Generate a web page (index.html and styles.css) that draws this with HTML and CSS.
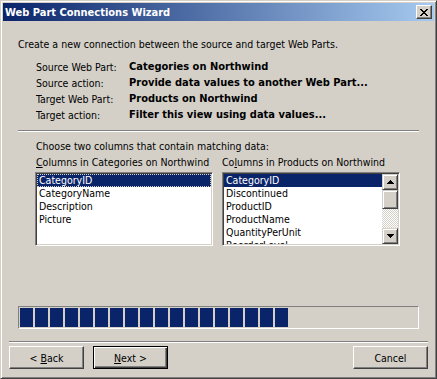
FILE: index.html
```html
<!DOCTYPE html>
<html lang="en">
<head>
    <meta charset="UTF-8">
    <meta name="viewport" content="width=device-width, initial-scale=1.0">
    <title>Web Part Connections Wizard</title>
    <link rel="stylesheet" href="styles.css">
</head>
<body>

    <div class="window">
        <!-- Title Bar -->
        <div class="titlebar">
            <span class="title">Web Part Connections Wizard</span>
            <button class="close-btn" title="Close">
                <svg width="8" height="7" viewBox="0 0 8 7"><path d="M0 0h2v1h-2zM6 0h2v1h-2zM1 1h2v1h-2zM5 1h2v1h-2zM2 2h4v1h-4zM3 3h2v1h-2zM2 4h4v1h-4zM1 5h2v1h-2zM5 5h2v1h-2zM0 6h2v1h-2zM6 6h2v1h-2z"/></svg>
            </button>
        </div>

        <!-- Wizard Page -->
        <div class="content">
            <p class="intro">Create a new connection between the source and target Web Parts.</p>

            <dl class="summary">
                <dt>Source Web Part:</dt>
                <dd>Categories on Northwind</dd>
                <dt>Source action:</dt>
                <dd>Provide data values to another Web Part...</dd>
                <dt>Target Web Part:</dt>
                <dd>Products on Northwind</dd>
                <dt>Target action:</dt>
                <dd>Filter this view using data values...</dd>
            </dl>

            <div class="etched"></div>

            <p class="choose">Choose two columns that contain matching data:</p>

            <div class="lists">
                <div class="list-group">
                    <label><u>C</u>olumns in Categories on Northwind</label>
                    <div class="listbox">
                        <ul class="items">
                            <li class="selected focused">CategoryID</li>
                            <li>CategoryName</li>
                            <li>Description</li>
                            <li>Picture</li>
                        </ul>
                    </div>
                </div>
                <div class="list-group">
                    <label>Co<u>l</u>umns in Products on Northwind</label>
                    <div class="listbox">
                        <ul class="items">
                            <li class="selected">CategoryID</li>
                            <li>Discontinued</li>
                            <li>ProductID</li>
                            <li>ProductName</li>
                            <li>QuantityPerUnit</li>
                            <li>ReorderLevel</li>
                        </ul>
                        <div class="scrollbar">
                            <div class="scroll-btn">
                                <svg width="7" height="4" viewBox="0 0 7 4"><path d="M3 0h1v1h1v1h1v1h1v1h-7v-1h1v-1h1v-1h1z"/></svg>
                            </div>
                            <div class="scroll-btn thumb"></div>
                            <div class="track"></div>
                            <div class="scroll-btn">
                                <svg width="7" height="4" viewBox="0 0 7 4"><path d="M0 0h7v1h-1v1h-1v1h-1v1h-1v-1h-1v-1h-1v-1h-1z"/></svg>
                            </div>
                        </div>
                    </div>
                </div>
            </div>

            <div class="progress">
                <span class="block"></span><span class="block"></span><span class="block"></span>
                <span class="block"></span><span class="block"></span><span class="block"></span>
                <span class="block"></span><span class="block"></span><span class="block"></span>
                <span class="block"></span><span class="block"></span><span class="block"></span>
                <span class="block"></span><span class="block"></span><span class="block"></span>
                <span class="block"></span><span class="block"></span><span class="block"></span>
            </div>
        </div>

        <div class="etched footer-line"></div>

        <!-- Buttons -->
        <div class="buttons">
            <button class="btn">&lt; <u>B</u>ack</button>
            <button class="btn default"><u>N</u>ext &gt;</button>
            <button class="btn cancel">Cancel</button>
        </div>
    </div>

</body>
</html>
```

FILE: styles.css
```css
* {
    box-sizing: border-box;
    margin: 0;
    padding: 0;
}
body {
    font-family: Tahoma, "DejaVu Sans Condensed", "Liberation Sans", sans-serif;
    font-size: 10.5px;
    background-color: #d4d0c8;
    color: #000;
}
.window {
    width: 437px;
    height: 379px;
    padding: 2px;
    background-color: #d4d0c8;
    border: 1px solid;
    border-color: #d4d0c8 #404040 #404040 #d4d0c8;
    box-shadow: inset 1px 1px #fff, inset -1px -1px #808080;
}
.titlebar {
    height: 18px;
    display: flex;
    align-items: center;
    justify-content: space-between;
    padding: 0 2px;
    background: linear-gradient(to right, #0a246a, #a6caf0);
    color: #fff;
    font-size: 11px;
    font-weight: bold;
}
.close-btn {
    width: 16px;
    height: 14px;
    display: flex;
    align-items: center;
    justify-content: center;
    background-color: #d4d0c8;
    border: 1px solid;
    border-color: #fff #404040 #404040 #fff;
    box-shadow: inset -1px -1px #808080;
}
.content {
    padding: 17px 15px 0;
}
.intro {
    line-height: 13px;
    margin-bottom: 8px;
}
.summary {
    display: grid;
    grid-template-columns: 93px auto;
    margin-left: 18px;
    line-height: 16px;
}
.summary dd {
    font-size: 11px;
    font-weight: bold;
}
.etched {
    height: 2px;
    margin-top: 7px;
    border-top: 1px solid #808080;
    border-bottom: 1px solid #fff;
}
.choose {
    margin: 8px 0 0 18px;
    line-height: 13px;
}
.lists {
    display: grid;
    grid-template-columns: 178px 178px;
    column-gap: 9px;
    margin: 3px 0 0 17px;
}
.list-group label {
    display: block;
    line-height: 13px;
    margin-bottom: 3px;
    white-space: nowrap;
}
.list-group:first-child label {
    padding-left: 1px;
}
.listbox {
    height: 74px;
    display: flex;
    padding: 1px;
    background-color: #fff;
    border: 1px solid;
    border-color: #808080 #fff #fff #808080;
    box-shadow: inset 1px 1px #404040, inset -1px -1px #d4d0c8;
}
.items {
    flex: 1;
    list-style: none;
    overflow: hidden;
}
.items li {
    line-height: 13px;
    padding-left: 2px;
    white-space: nowrap;
}
.items li.selected {
    background-color: #0a246a;
    color: #fff;
}
.items li.focused {
    outline: 1px dotted #d4d0c8;
    outline-offset: -1px;
}
.scrollbar {
    width: 16px;
    display: flex;
    flex-direction: column;
}
.scroll-btn {
    height: 16px;
    display: flex;
    align-items: center;
    justify-content: center;
    background-color: #d4d0c8;
    border: 1px solid;
    border-color: #d4d0c8 #404040 #404040 #d4d0c8;
    box-shadow: inset 1px 1px #fff, inset -1px -1px #808080;
}
.scroll-btn.thumb {
    height: 19px;
}
.track {
    flex: 1;
    background: repeating-conic-gradient(#d4d0c8 0 25%, #fff 0 50%) 0 0 / 2px 2px;
}
.progress {
    height: 23px;
    margin-top: 60px;
    display: flex;
    gap: 2px;
    padding: 1px;
    border: 1px solid;
    border-color: #808080 #fff #fff #808080;
}
.block {
    width: 13px;
    background-color: #0a246a;
}
.footer-line {
    margin: 12px 6px 0;
}
.buttons {
    display: flex;
    gap: 9px;
    margin: 3px 6px 0;
}
.btn {
    width: 75px;
    height: 23px;
    font: inherit;
    color: #000;
    background-color: #d4d0c8;
    border: 1px solid;
    border-color: #fff #404040 #404040 #fff;
    box-shadow: inset -1px -1px #808080;
}
.btn.default {
    border-color: #000;
    box-shadow: inset 1px 1px #fff, inset -1px -1px #404040, inset -2px -2px #808080;
}
.btn.cancel {
    margin-left: auto;
}
```
